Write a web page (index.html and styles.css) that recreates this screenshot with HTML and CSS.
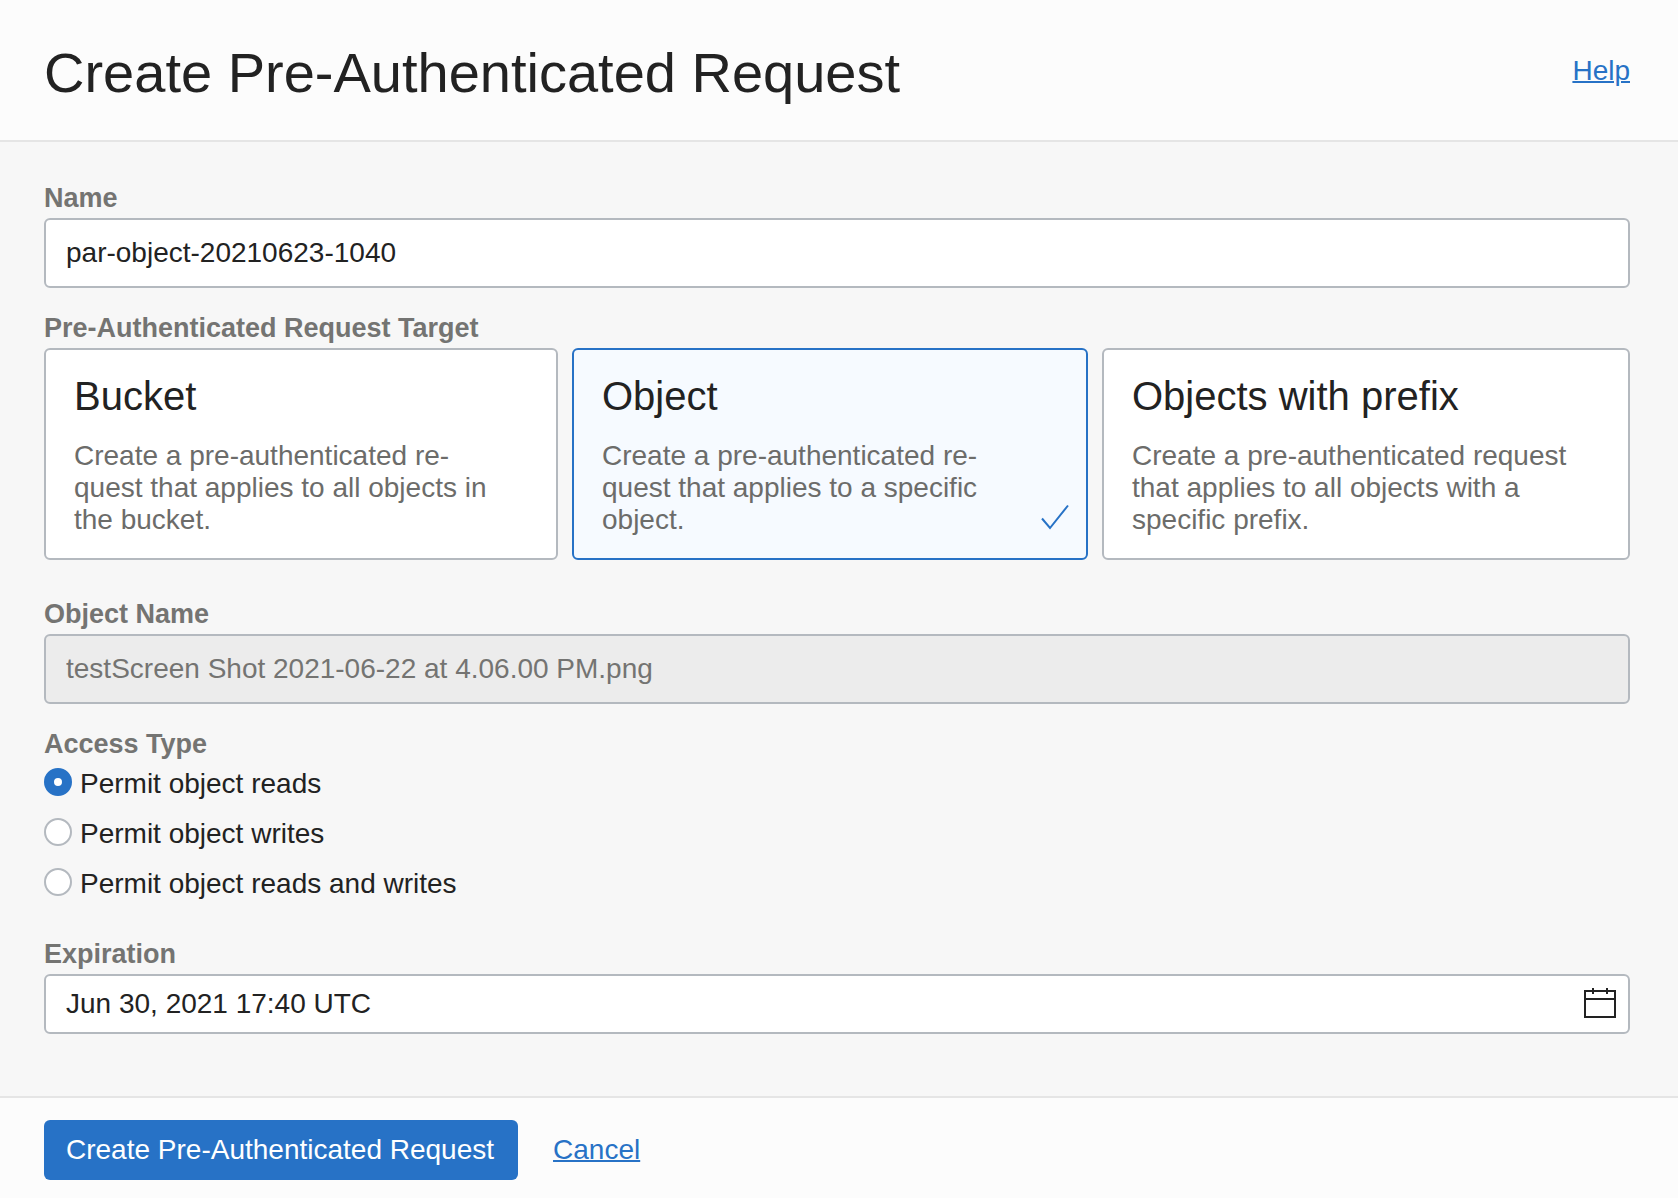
FILE: index.html
```html
<!DOCTYPE html>
<html lang="en">
<head>
<meta charset="utf-8">
<meta name="viewport" content="width=device-width, initial-scale=1">
<title>Create Pre-Authenticated Request</title>
<link rel="stylesheet" href="styles.css">
</head>
<body>
<form class="panel">
  <header class="panel-header">
    <h1 class="panel-title">Create Pre-Authenticated Request</h1>
    <a class="link help-link" href="#help">Help</a>
  </header>

  <main class="panel-body">
    <div class="field">
      <label class="field-label" for="par-name">Name</label>
      <input class="text-input" id="par-name" type="text" value="par-object-20210623-1040">
    </div>

    <div class="field" role="radiogroup" aria-labelledby="target-label">
      <div class="field-label" id="target-label">Pre-Authenticated Request Target</div>
      <div class="cards">
        <label class="card">
          <input class="card-radio" type="radio" name="target" value="bucket">
          <span class="card-title">Bucket</span>
          <span class="card-text">Create a pre-authenticated re&shy;quest that applies to all objects in the bucket.</span>
        </label>
        <label class="card card-selected">
          <input class="card-radio" type="radio" name="target" value="object" checked>
          <span class="card-title">Object</span>
          <span class="card-text">Create a pre-authenticated re&shy;quest that applies to a specific object.</span>
          <svg class="card-check" viewBox="0 0 28 26" aria-hidden="true"><path d="M1 14.5 9 24 27 1.5"/></svg>
        </label>
        <label class="card">
          <input class="card-radio" type="radio" name="target" value="prefix">
          <span class="card-title">Objects with prefix</span>
          <span class="card-text">Create a pre-authenticated re&shy;quest that applies to all objects with a specific prefix.</span>
        </label>
      </div>
    </div>

    <div class="field field-spaced">
      <label class="field-label" for="object-name">Object Name</label>
      <input class="text-input" id="object-name" type="text" value="testScreen Shot 2021-06-22 at 4.06.00 PM.png" disabled>
    </div>

    <div class="field" role="radiogroup" aria-labelledby="access-label">
      <div class="field-label" id="access-label">Access Type</div>
      <div class="options">
        <label class="option"><input class="radio" type="radio" name="access" checked>Permit object reads</label>
        <label class="option"><input class="radio" type="radio" name="access">Permit object writes</label>
        <label class="option"><input class="radio" type="radio" name="access">Permit object reads and writes</label>
      </div>
    </div>

    <div class="field field-spaced">
      <label class="field-label" for="expiration">Expiration</label>
      <div class="date-field">
        <input class="date-input" id="expiration" type="text" value="Jun 30, 2021 17:40 UTC">
        <button class="date-button" type="button" aria-label="Open calendar">
          <svg class="date-icon" viewBox="0 0 32 32" aria-hidden="true"><path d="M1 3H31V29H1ZM1 11H31M9 0V6M23 0V6"/></svg>
        </button>
      </div>
    </div>
  </main>

  <footer class="panel-footer">
    <button class="primary-button" type="submit">Create Pre-Authenticated Request</button>
    <a class="link" href="#cancel">Cancel</a>
  </footer>
</form>
</body>
</html>
```
FILE: styles.css
```css
:root {
  --blue: #2772c6;
  --border: #b4b9bf;
  --text: #222;
  --muted: #6c6c6a;
  --label: #747472;
}

* { box-sizing: border-box; }

body {
  margin: 0;
  background: #f7f7f7;
  color: var(--text);
  font: 28px/32px "Helvetica Neue", "Liberation Sans", Arial, sans-serif;
}

input, button { font: inherit; color: inherit; margin: 0; }

.panel {
  display: flex;
  flex-direction: column;
  min-height: 100vh;
}

.panel-header {
  display: flex;
  justify-content: space-between;
  align-items: flex-start;
  padding: 41px 48px 35px 44px;
  background: #fcfcfc;
  border-bottom: 2px solid #e5e5e5;
}

.panel-title {
  margin: 0;
  font-size: 56px;
  line-height: 64px;
  font-weight: 400;
}

.link {
  color: var(--blue);
  text-decoration: underline;
  text-decoration-thickness: 2px;
}

.help-link { margin-top: 14px; }

.panel-body {
  flex: 1;
  display: flex;
  flex-direction: column;
  gap: 24px;
  padding: 40px 48px 62px 44px;
}

.field {
  display: flex;
  flex-direction: column;
  gap: 4px;
}

.field-spaced { margin-top: 14px; }

.field-label {
  color: var(--label);
  font-size: 27px;
  font-weight: 500;
  font-weight: 700;
}

.text-input,
.date-field {
  width: 100%;
  border: 2px solid var(--border);
  border-radius: 6px;
  background: #fff;
}

.text-input {
  height: 70px;
  padding: 0 20px;
}

.text-input:disabled {
  background: #ececec;
  color: var(--label);
}

.cards {
  display: grid;
  grid-template-columns: 514fr 516fr 528fr;
  gap: 14px;
}

.card {
  position: relative;
  display: flex;
  flex-direction: column;
  gap: 20px;
  padding: 22px 54px 22px 28px;
  border: 2px solid var(--border);
  border-radius: 6px;
  background: #fff;
}

.card-selected {
  border-color: var(--blue);
  background: #f6faff;
}

.card-radio {
  position: absolute;
  inset: 0;
  width: 100%;
  height: 100%;
  opacity: 0;
}

.card-title {
  font-size: 40px;
  line-height: 48px;
}

.card-text { color: var(--muted); }

.card-check {
  position: absolute;
  right: 17px;
  bottom: 28px;
  width: 28px;
  height: 26px;
  fill: none;
  stroke: var(--blue);
  stroke-width: 2;
}

.options {
  display: flex;
  flex-direction: column;
  align-items: flex-start;
  gap: 18px;
  padding-top: 4px;
}

.option {
  display: flex;
  align-items: flex-start;
  gap: 8px;
}

.radio {
  appearance: none;
  width: 28px;
  height: 28px;
  border: 2px solid var(--border);
  border-radius: 50%;
  background: #fff;
}

.radio:checked {
  border: 10px solid var(--blue);
}

.date-field {
  display: flex;
  align-items: center;
  height: 60px;
  padding: 0 12px 0 20px;
}

.date-input {
  flex: 1;
  min-width: 0;
  padding: 0;
  border: 0;
  outline: 0;
  background: none;
}

.date-button {
  display: flex;
  padding: 0;
  border: 0;
  background: none;
}

.date-icon {
  width: 32px;
  height: 32px;
  fill: none;
  stroke: var(--text);
  stroke-width: 2;
}

.panel-footer {
  display: flex;
  align-items: center;
  gap: 35px;
  padding: 22px 48px 18px 44px;
  background: #fcfcfc;
  border-top: 2px solid #e5e5e5;
}

.primary-button {
  height: 60px;
  padding: 0 24px 0 22px;
  border: 0;
  border-radius: 6px;
  background: var(--blue);
  color: #fff;
}
```
